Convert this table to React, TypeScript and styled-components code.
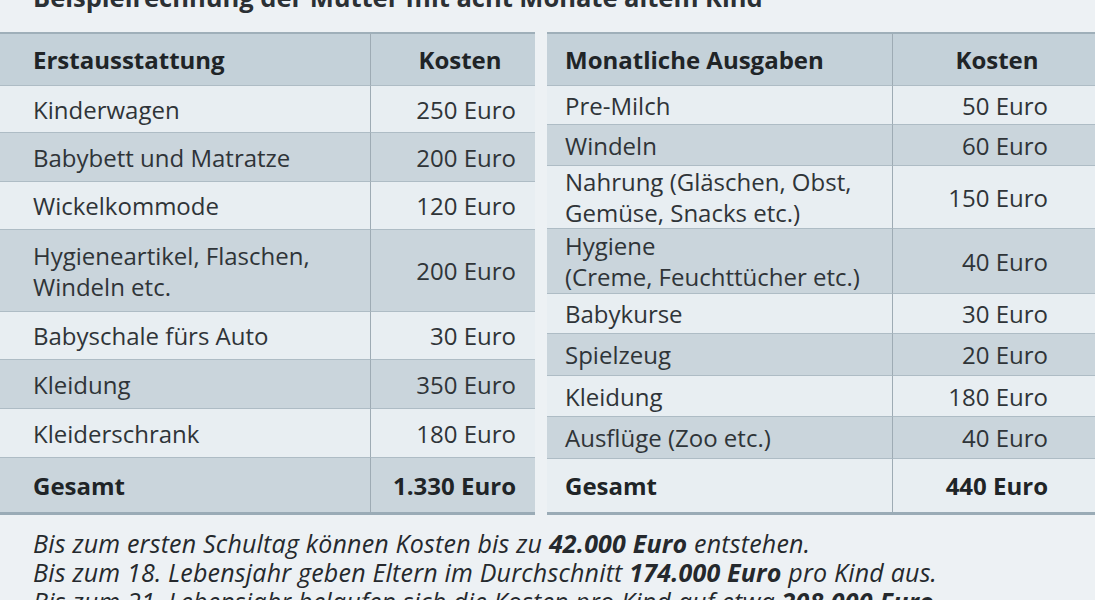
import React from "react";
import styled, { createGlobalStyle } from "styled-components";

const Global = createGlobalStyle`
  html, body { margin: 0; padding: 0; background: #edf1f4; }
  body { font-family: "Open Sans", "Noto Sans", sans-serif; color: #2b3034; overflow: hidden; }
`;

const Page = styled.div`
  width: 1095px;
  height: 600px;
  overflow: hidden;
  background: #edf1f4;
  display: flex;
  flex-direction: column;
`;

const Title = styled.h1`
  margin: -18px 0 0 33px;
  height: 30px;
  font-size: 25.5px;
  line-height: 30px;
  font-weight: 700;
  color: #2b3034;
  white-space: nowrap;
`;

const Tables = styled.div`
  margin-top: 20px;
  display: grid;
  grid-template-columns: 535px 548px;
  column-gap: 12px;
`;

const Table = styled.div<{ $cols: string }>`
  display: grid;
  grid-template-columns: ${(p) => p.$cols};
  border-top: 2px solid #9fafb9;
  border-bottom: 3px solid #9aabb6;
`;

const Row = styled.div<{ $h: number; $tone: "head" | "light" | "dark"; $first?: boolean }>`
  display: contents;
  & > div {
    height: ${(p) => p.$h}px;
    background: ${(p) =>
      p.$tone === "head" ? "#c4d1d9" : p.$tone === "dark" ? "#cad5dc" : "#e8eef2"};
    border-top: ${(p) => (p.$first ? "none" : "1.5px solid #aebcc5")};
  }
`;

const Cell = styled.div<{ $pl: number; $pr: number; $align: "left" | "right" | "center"; $bold?: boolean; $divider?: boolean }>`
  box-sizing: border-box;
  display: flex;
  align-items: center;
  justify-content: ${(p) => (p.$align === "left" ? "flex-start" : p.$align === "right" ? "flex-end" : "center")};
  text-align: ${(p) => p.$align};
  padding: 0 ${(p) => p.$pr}px 0 ${(p) => p.$pl}px;
  font-size: 24px;
  line-height: 31px;
  font-weight: ${(p) => (p.$bold ? 700 : 400)};
  color: ${(p) => (p.$bold ? "#202427" : "#2f3438")};
  border-right: ${(p) => (p.$divider ? "1.5px solid #9eabb4" : "none")};
  white-space: nowrap;
`;

const Footer = styled.div`
  margin: 14px 0 0 33px;
  font-size: 25px;
  line-height: 29px;
  letter-spacing: 0.2px;
  font-style: italic;
  color: #25292d;
  white-space: nowrap;
  b { font-weight: 700; }
`;

type Item = { label: React.ReactNode; cost: string; h: number };

type Spec = {
  cols: string;
  head: string;
  headH: number;
  padL: number;
  costPadR: number;
  headPadL: number;
  items: Item[];
  total: string;
  totalH: number;
};

const left: Spec = {
  cols: "371px 164px",
  head: "Erstausstattung",
  headH: 51,
  padL: 33,
  costPadR: 19,
  headPadL: 14,
  items: [
    { label: "Kinderwagen", cost: "250 Euro", h: 47 },
    { label: "Babybett und Matratze", cost: "200 Euro", h: 49 },
    { label: "Wickelkommode", cost: "120 Euro", h: 48 },
    { label: <>Hygieneartikel, Flaschen,<br />Windeln etc.</>, cost: "200 Euro", h: 82 },
    { label: "Babyschale fürs Auto", cost: "30 Euro", h: 48 },
    { label: "Kleidung", cost: "350 Euro", h: 49 },
    { label: "Kleiderschrank", cost: "180 Euro", h: 49 },
  ],
  total: "1.330 Euro",
  totalH: 55,
};

const right: Spec = {
  cols: "346px 202px",
  head: "Monatliche Ausgaben",
  headH: 51,
  padL: 18,
  costPadR: 47,
  headPadL: 6,
  items: [
    { label: "Pre-Milch", cost: "50 Euro", h: 39 },
    { label: "Windeln", cost: "60 Euro", h: 41 },
    { label: <>Nahrung (Gläschen, Obst,<br />Gemüse, Snacks etc.)</>, cost: "150 Euro", h: 63 },
    { label: <>Hygiene<br />(Creme, Feuchttücher etc.)</>, cost: "40 Euro", h: 65 },
    { label: "Babykurse", cost: "30 Euro", h: 40 },
    { label: "Spielzeug", cost: "20 Euro", h: 42 },
    { label: "Kleidung", cost: "180 Euro", h: 41 },
    { label: "Ausflüge (Zoo etc.)", cost: "40 Euro", h: 42 },
  ],
  total: "440 Euro",
  totalH: 54,
};

function CostTable({ spec }: { spec: Spec }) {
  const n = spec.items.length;
  const totalTone = n % 2 === 0 ? "light" : "dark";
  return (
    <Table $cols={spec.cols}>
      <Row $h={spec.headH} $tone="head" $first>
        <Cell $pl={spec.padL} $pr={10} $align="left" $bold $divider>{spec.head}</Cell>
        <Cell $pl={spec.headPadL} $pr={0} $align="center" $bold>Kosten</Cell>
      </Row>
      {spec.items.map((it, i) => (
        <Row key={i} $h={it.h} $tone={i % 2 === 0 ? "light" : "dark"}>
          <Cell $pl={spec.padL} $pr={10} $align="left" $divider>{it.label}</Cell>
          <Cell $pl={0} $pr={spec.costPadR} $align="right">{it.cost}</Cell>
        </Row>
      ))}
      <Row $h={spec.totalH} $tone={totalTone}>
        <Cell $pl={spec.padL} $pr={10} $align="left" $bold $divider>Gesamt</Cell>
        <Cell $pl={0} $pr={spec.costPadR} $align="right" $bold>{spec.total}</Cell>
      </Row>
    </Table>
  );
}

export default function App() {
  return (
    <Page>
      <Global />
      <Title>Beispielrechnung der Mutter mit acht Monate altem Kind</Title>
      <Tables>
        <CostTable spec={left} />
        <CostTable spec={right} />
      </Tables>
      <Footer>
        Bis zum ersten Schultag können Kosten bis zu <b>42.000 Euro</b> entstehen.
        <br />
        Bis zum 18. Lebensjahr geben Eltern im Durchschnitt <b>174.000 Euro</b> pro Kind aus.
        <br />
        Bis zum 21. Lebensjahr belaufen sich die Kosten pro Kind auf etwa <b>208.000 Euro</b>.
      </Footer>
    </Page>
  );
}
